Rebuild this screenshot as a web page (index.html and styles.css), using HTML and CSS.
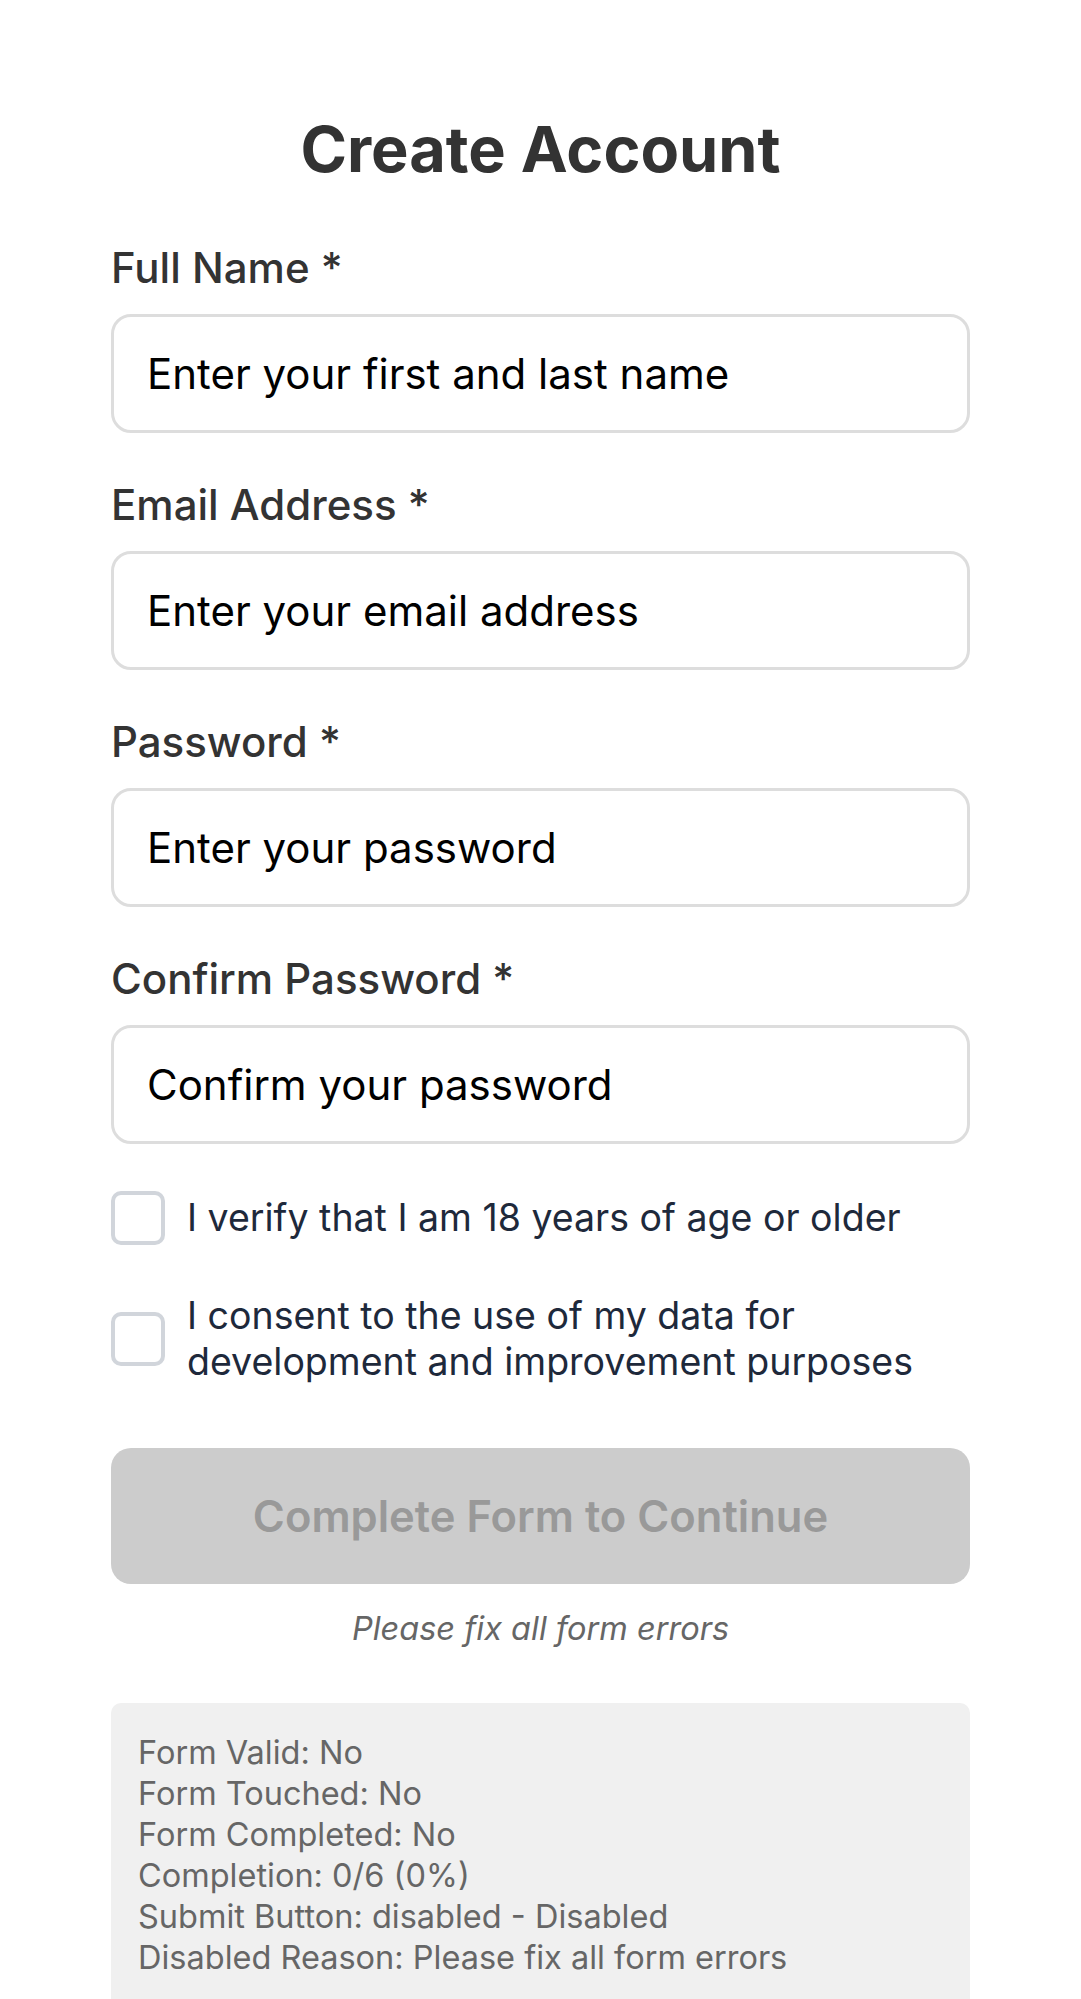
FILE: index.html
```html
<!DOCTYPE html>
<html lang="en">
<head>
<meta charset="utf-8">
<title>Create Account</title>
<link rel="stylesheet" href="styles.css">
</head>
<body>
<main class="page">
  <h1 class="title">Create Account</h1>
  <form class="form">
    <div class="field">
      <label class="label">Full Name *</label>
      <div class="input"><span class="placeholder">Enter your first and last name</span></div>
    </div>
    <div class="field">
      <label class="label">Email Address *</label>
      <div class="input"><span class="placeholder">Enter your email address</span></div>
    </div>
    <div class="field">
      <label class="label">Password *</label>
      <div class="input"><span class="placeholder">Enter your password</span></div>
    </div>
    <div class="field">
      <label class="label">Confirm Password *</label>
      <div class="input"><span class="placeholder">Confirm your password</span></div>
    </div>
    <div class="checks">
      <div class="check">
        <span class="box"></span>
        <span class="check-text">I verify that I am 18 years of age or older</span>
      </div>
      <div class="check">
        <span class="box"></span>
        <span class="check-text">I consent to the use of my data for<br>development and improvement purposes</span>
      </div>
    </div>
    <div class="submit">Complete Form to Continue</div>
    <p class="hint">Please fix all form errors</p>
    <div class="debug">
      <div>Form Valid: No</div>
      <div>Form Touched: No</div>
      <div>Form Completed: No</div>
      <div>Completion: 0/6 (0%)</div>
      <div>Submit Button: disabled - Disabled</div>
      <div>Disabled Reason: Please fix all form errors</div>
    </div>
  </form>
</main>
</body>
</html>
```
FILE: styles.css
```css
html, body {
  margin: 0;
  padding: 0;
  background: #ffffff;
}
body {
  font-family: Inter, "Noto Sans", "Liberation Sans", sans-serif;
  color: #333333;
}
.page {
  padding: 116px 111px 0;
}
.title {
  margin: 0 0 63px;
  font-size: 63px;
  line-height: 67px;
  font-weight: 700;
  text-align: center;
  color: #333333;
}
.form {
  display: flex;
  flex-direction: column;
}
.field {
  display: flex;
  flex-direction: column;
  margin-bottom: 50px;
}
.label {
  font-size: 42px;
  line-height: 43px;
  font-weight: 500;
  color: #333333;
  margin-bottom: 25px;
}
.input {
  height: 119px;
  box-sizing: border-box;
  border: 3px solid #dddddd;
  border-radius: 20px;
  padding: 0 33px;
  display: flex;
  align-items: center;
}
.placeholder {
  font-size: 42px;
  color: #000000;
}
.checks {
  display: flex;
  flex-direction: column;
  gap: 48px;
  margin-top: -3px;
}
.check {
  display: flex;
  align-items: center;
  gap: 22px;
}
.box {
  flex: none;
  width: 54px;
  height: 54px;
  box-sizing: border-box;
  border: 4.5px solid #d1d5db;
  border-radius: 10px;
}
.check-text {
  font-size: 37.5px;
  line-height: 46px;
  color: #1e293b;
}
.submit {
  margin-top: 63px;
  height: 136px;
  border-radius: 20px;
  background: #cccccc;
  color: #999999;
  font-size: 43.5px;
  font-weight: 600;
  display: flex;
  align-items: center;
  justify-content: center;
}
.hint {
  margin: 24px 0 0;
  text-align: center;
  font-style: italic;
  font-size: 32.5px;
  line-height: 42px;
  color: #666666;
}
.debug {
  margin-top: 53px;
  background: #f0f0f0;
  border-radius: 10px;
  padding: 29px 27px 40px;
  font-size: 32.5px;
  line-height: 41px;
  color: #666666;
}
```
